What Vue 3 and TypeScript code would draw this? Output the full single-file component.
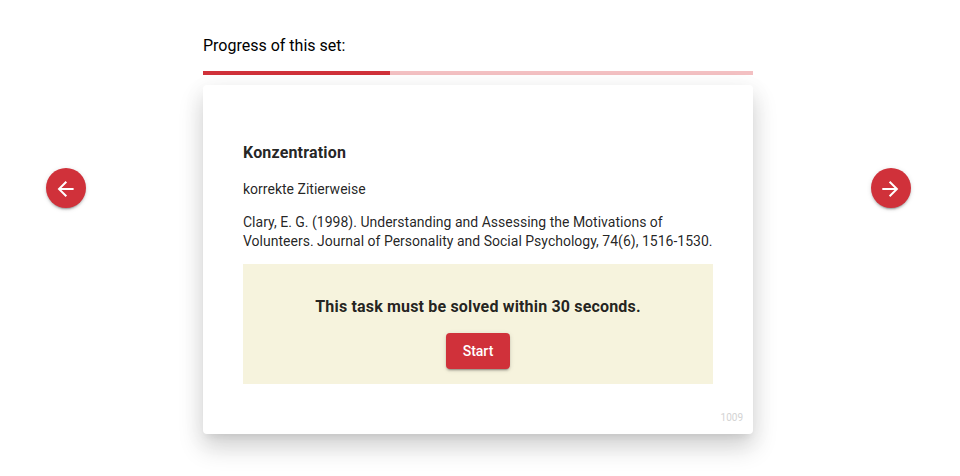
<script setup lang="ts">
const progress: number = 34
</script>

<template>
  <main class="page">
    <button class="fab" type="button" aria-label="Previous">
      <svg viewBox="0.4 0 24 24"><path d="M20 11H7.83l5.59-5.59L12 4l-8 8 8 8 1.41-1.41L7.83 13H20v-2z" /></svg>
    </button>
    <section class="center">
      <p class="label">Progress of this set:</p>
      <div class="track"><div class="bar" :style="{ width: progress + '%' }"></div></div>
      <article class="card">
        <h3 class="title">Konzentration</h3>
        <p class="text">korrekte Zitierweise</p>
        <p class="text">Clary, E. G. (1998). Understanding and Assessing the Motivations of Volunteers. Journal of Personality and Social Psychology, 74(6), 1516-1530.</p>
        <div class="notice">
          <h3 class="notice-title">This task must be solved within 30 seconds.</h3>
          <button class="start" type="button">Start</button>
        </div>
        <span class="number">1009</span>
      </article>
    </section>
    <button class="fab" type="button" aria-label="Next">
      <svg viewBox="0.7 0 24 24"><path d="M12 4l-1.41 1.41L16.17 11H4v2h12.17l-5.58 5.59L12 20l8-8z" /></svg>
    </button>
  </main>
</template>

<style>
body {
  background: #fff;
  overflow: hidden;
}
</style>

<style scoped>
.page {
  box-sizing: border-box;
  height: 476px;
  padding: 0 49px 0 46px;
  display: grid;
  grid-template-columns: 157px 550px 1fr;
  align-items: start;
  font-family: Roboto, sans-serif;
  color: #000;
}
.fab {
  width: 40px;
  height: 40px;
  margin-top: 168px;
  padding: 2px 0 0;
  border: 0;
  border-radius: 50%;
  background: #d0313a;
  display: flex;
  align-items: center;
  justify-content: center;
  box-shadow: 0 3px 1px -2px rgba(0, 0, 0, .2), 0 2px 2px 0 rgba(0, 0, 0, .14), 0 1px 5px 0 rgba(0, 0, 0, .12);
}
.fab:last-child {
  justify-self: end;
}
.fab svg {
  width: 24px;
  height: 24px;
  fill: #fff;
}
.center {
  padding-top: 36px;
}
.label {
  margin: 0 0 16px;
  font-size: 16px;
  line-height: 19px;
}
.track {
  height: 4px;
  background: #f3c0c2;
}
.bar {
  height: 100%;
  background: #d0313a;
}
.card {
  box-sizing: border-box;
  height: 349px;
  margin-top: 10px;
  padding: 58px 40px 0;
  position: relative;
  border-radius: 4px;
  background: #fff;
  color: rgba(0, 0, 0, .87);
  box-shadow: 0 6px 8px -4px rgba(0, 0, 0, .08), 0 13px 24px 1px rgba(0, 0, 0, .16), 0 5px 22px 4px rgba(0, 0, 0, .03);
}
.title {
  margin: 0 0 18px;
  font-size: 16px;
  line-height: 19px;
  font-weight: 700;
  letter-spacing: .17px;
}
.text {
  margin: 0 0 14px;
  font-size: 14px;
  line-height: 19px;
  letter-spacing: .008px;
}
.notice {
  box-sizing: border-box;
  height: 120px;
  margin-top: -1px;
  padding-top: 33px;
  background: #f6f3dd;
  display: flex;
  flex-direction: column;
  align-items: center;
}
.notice-title {
  margin: 0 0 17px;
  font-size: 16px;
  line-height: 19px;
  font-weight: 700;
  letter-spacing: .17px;
}
.start {
  width: 64px;
  height: 36px;
  padding: 0;
  border: 0;
  border-radius: 4px;
  background: #d0313a;
  color: #fff;
  font-family: inherit;
  font-size: 14px;
  font-weight: 500;
  box-shadow: 0 3px 1px -2px rgba(0, 0, 0, .2), 0 2px 2px 0 rgba(0, 0, 0, .14), 0 1px 5px 0 rgba(0, 0, 0, .12);
}
.number {
  position: absolute;
  right: 10px;
  bottom: 10px;
  font-size: 10px;
  line-height: 12px;
  color: #d3d3d3;
}
</style>
